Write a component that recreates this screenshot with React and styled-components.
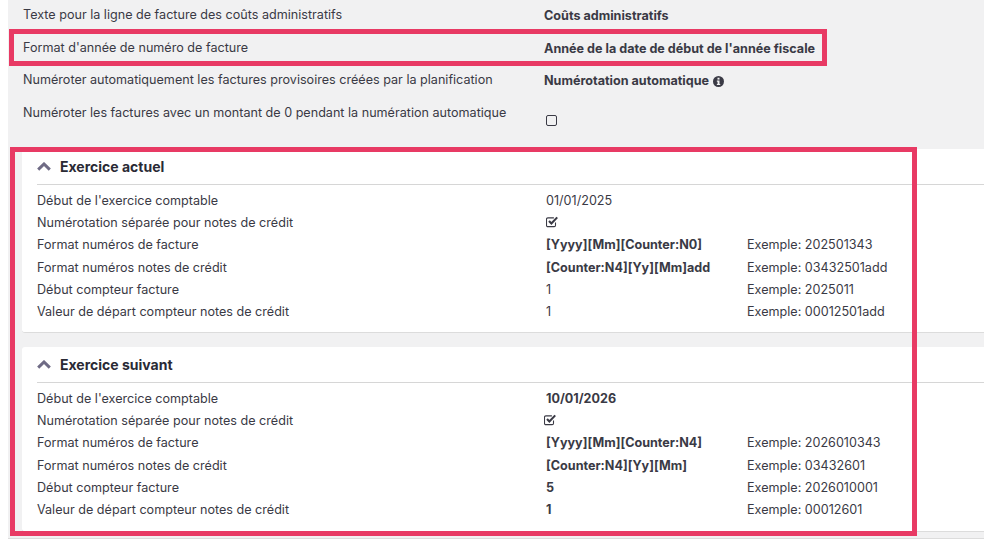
import React from 'react'
import styled, { createGlobalStyle } from 'styled-components'

const GlobalStyle = createGlobalStyle`
    html, body {
        margin: 0;
        padding: 0;
        background: #ffffff;
    }
    body {
        font-family: Inter, "Liberation Sans", sans-serif;
        font-size: 12.6px;
        color: #3a3a45;
        overflow: hidden;
    }
`
const Page = styled.div`
    position: relative;
    width: 984px;
    height: 545px;
    overflow: hidden;
    padding-left: 8px;
    box-sizing: border-box;
`
const Panel = styled.div`
    background: #f1f1f2;
    height: 539px;
    border-bottom: 1px solid #dcdcdc;
    box-sizing: border-box;
`
const Settings = styled.div`
    height: 149px;
    padding: 0 0 0 15px;
    box-sizing: border-box;
`
const SettingRow = styled.div`
    display: grid;
    grid-template-columns: 521px 1fr;
    height: ${props => props.$height || 32.5}px;
    line-height: 30px;
`
const SettingValue = styled.div`
    font-weight: 700;
    display: flex;
    align-items: center;
    gap: 4px;
    height: 32px;
`
const CheckCell = styled.div`
    padding: 15px 0 0 2px;
`
const EmptyBox = styled.span`
    display: block;
    width: 9px;
    height: 9px;
    border: 1px solid #3a3a45;
    border-radius: 2px;
    margin-top: 2px;
`
const Cards = styled.div`
    padding: 0 0 0 14px;
`
const Card = styled.section`
    background: #ffffff;
    padding: 0 0 0 15px;
    margin-bottom: ${props => props.$gap}px;
    height: ${props => props.$height}px;
    border-bottom: 1px solid #dcdcdc;
    border-radius: 3px 0 0 3px;
    box-sizing: border-box;
`
const CardHeader = styled.header`
    display: flex;
    align-items: center;
    gap: 9px;
    height: 36px;
    box-sizing: border-box;
    border-bottom: 1px solid #d6d6d6;
    font-size: 14px;
    font-weight: 700;
    color: #2a2a35;
`
const Rows = styled.div`
    padding-top: 5px;
`
const CardRow = styled.div`
    display: grid;
    grid-template-columns: 509px 201px 1fr;
    height: 22.2px;
    line-height: 22px;
`
const Value = styled.div`
    font-weight: ${props => props.$bold ? 700 : 400};
`
const Tick = styled.svg`
    display: block;
    margin: 4px 0 0 ${props => props.$shift || 0}px;
`
const Highlight = styled.div`
    position: absolute;
    left: ${props => props.$left}px;
    top: ${props => props.$top}px;
    width: ${props => props.$width}px;
    height: ${props => props.$height}px;
    border: 5px solid #e83a64;
    box-sizing: border-box;
`

const Chevron = () => (
    <svg width="14" height="9" viewBox="0 0 14 9">
        <path d="M1.2 7.6 7 2l5.8 5.6" fill="none" stroke="#6f6b85" strokeWidth="3" />
    </svg>
)

const InfoIcon = () => (
    <svg width="11" height="11" viewBox="0 0 12 12">
        <circle cx="6" cy="6" r="6" fill="#3a3a45" />
        <rect x="4.9" y="1.9" width="2.2" height="2" fill="#f1f1f2" />
        <path d="M4.2 4.9h2.9v3.7h.8v1.3H4.2V8.6h.8V6.2h-.8z" fill="#f1f1f2" />
    </svg>
)

const CheckedBox = ({ shift }) => (
    <Tick $shift={shift} width="13" height="12" viewBox="0 0 13 12">
        <path d="M9.5 6.5v2.7c0 .9-.5 1.4-1.3 1.4H1.9c-.9 0-1.4-.5-1.4-1.4V3.3c0-.9.5-1.4 1.4-1.4h6" fill="none" stroke="#3a3a45" strokeWidth="1.1" />
        <path d="M3 5 5.4 7.5 11.2 1.4" fill="none" stroke="#3a3a45" strokeWidth="2.1" />
    </Tick>
)

const current = [
    { label: "Début de l'exercice comptable", value: '01/01/2025' },
    { label: 'Numérotation séparée pour notes de crédit', check: true },
    { label: 'Format numéros de facture', value: '[Yyyy][Mm][Counter:N0]', bold: true, example: 'Exemple: 202501343' },
    { label: 'Format numéros notes de crédit', value: '[Counter:N4][Yy][Mm]add', bold: true, example: 'Exemple: 03432501add' },
    { label: 'Début compteur facture', value: '1', example: 'Exemple: 2025011' },
    { label: 'Valeur de départ compteur notes de crédit', value: '1', example: 'Exemple: 00012501add' },
]

const next = [
    { label: "Début de l'exercice comptable", value: '10/01/2026', bold: true },
    { label: 'Numérotation séparée pour notes de crédit', check: true, shift: -2 },
    { label: 'Format numéros de facture', value: '[Yyyy][Mm][Counter:N4]', bold: true, example: 'Exemple: 2026010343' },
    { label: 'Format numéros notes de crédit', value: '[Counter:N4][Yy][Mm]', bold: true, example: 'Exemple: 03432601' },
    { label: 'Début compteur facture', value: '5', bold: true, example: 'Exemple: 2026010001' },
    { label: 'Valeur de départ compteur notes de crédit', value: '1', bold: true, example: 'Exemple: 00012601' },
]

const Year = ({ title, rows, height, gap }) => (
    <Card $height={height} $gap={gap}>
        <CardHeader><Chevron />{title}</CardHeader>
        <Rows>
            {rows.map(row => (
                <CardRow key={row.label}>
                    <div>{row.label}</div>
                    {row.check
                        ? <div><CheckedBox shift={row.shift} /></div>
                        : <Value $bold={row.bold}>{row.value}</Value>}
                    <div>{row.example}</div>
                </CardRow>
            ))}
        </Rows>
    </Card>
)

const App = () => (
    <Page>
        <GlobalStyle />
        <Panel>
            <Settings>
                <SettingRow>
                    <div>Texte pour la ligne de facture des coûts administratifs</div>
                    <SettingValue>Coûts administratifs</SettingValue>
                </SettingRow>
                <SettingRow>
                    <div>Format d'année de numéro de facture</div>
                    <SettingValue>Année de la date de début de l'année fiscale</SettingValue>
                </SettingRow>
                <SettingRow>
                    <div>Numéroter automatiquement les factures provisoires créées par la planification</div>
                    <SettingValue>Numérotation automatique <InfoIcon /></SettingValue>
                </SettingRow>
                <SettingRow $height={50}>
                    <div>Numéroter les factures avec un montant de 0 pendant la numération automatique</div>
                    <CheckCell><EmptyBox /></CheckCell>
                </SettingRow>
            </Settings>
            <Cards>
                <Year title="Exercice actuel" rows={current} height={184} gap={14} />
                <Year title="Exercice suivant" rows={next} height={185} gap={0} />
            </Cards>
        </Panel>
        <Highlight $left={9} $top={29} $width={818} $height={37} />
        <Highlight $left={10} $top={147} $width={907} $height={389} />
    </Page>
)

export default App
